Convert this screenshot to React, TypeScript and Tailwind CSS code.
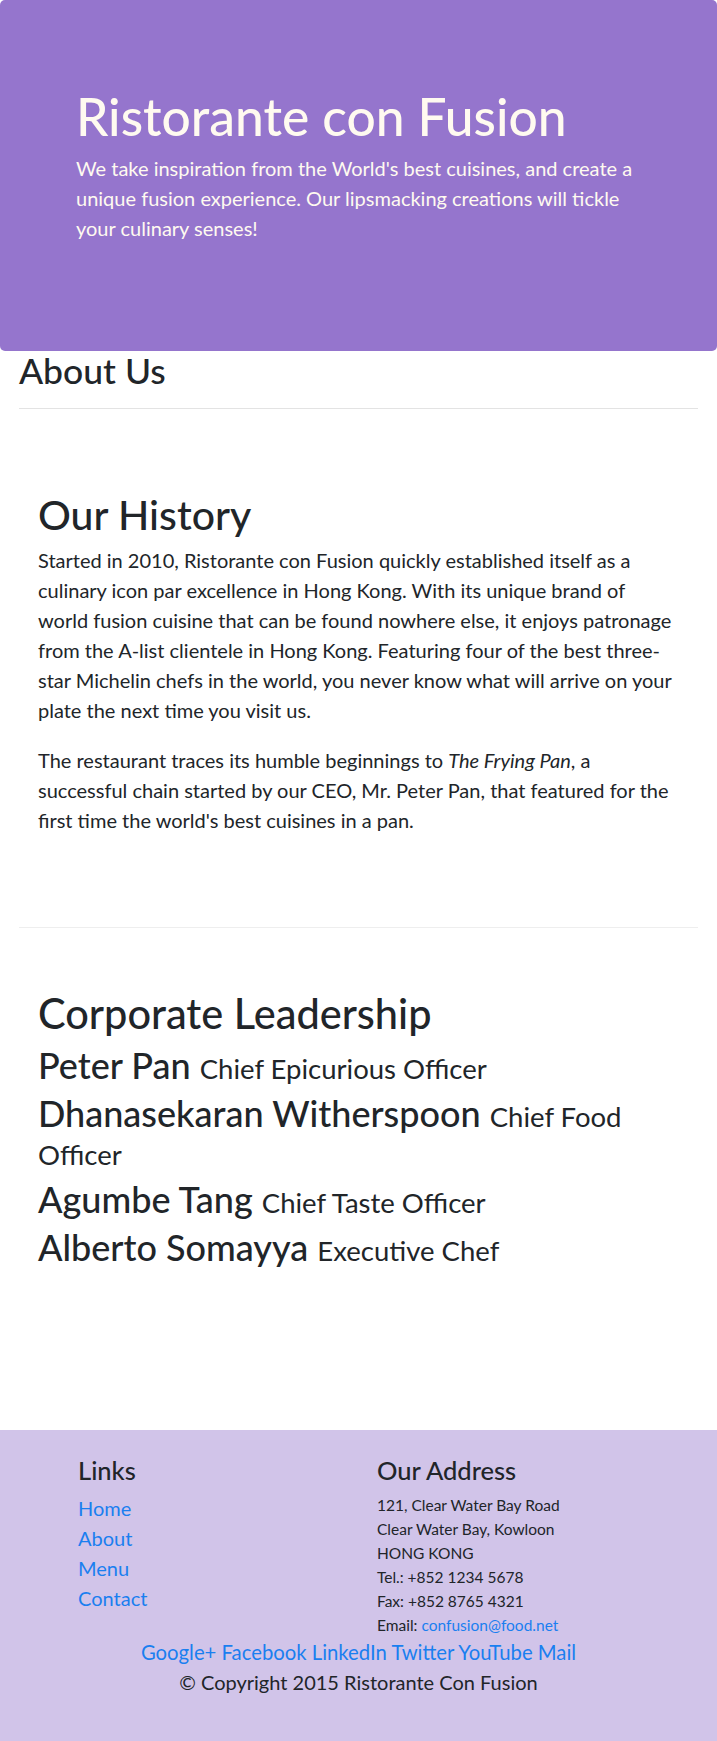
import React from "react";

const leaders: [string, string][] = [
  ["Peter Pan", "Chief Epicurious Officer"],
  ["Dhanasekaran Witherspoon", "Chief Food Officer"],
  ["Agumbe Tang", "Chief Taste Officer"],
  ["Alberto Somayya", "Executive Chef"],
];

export default function App() {
  return (
    <div className="min-h-[1741px] bg-white font-['Lato',sans-serif] text-[#212529]">
      {/* Jumbotron */}
      <header className="h-[351px] rounded-[5px] bg-[#9575cd] px-[76px] pt-[86px] text-[#fffaf0]">
        <h1 className="m-0 text-[51.5px] font-medium leading-[1.2]">Ristorante con Fusion</h1>
        <p className="mt-[5px] text-[20px] leading-[30px]">
          We take inspiration from the World's best cuisines, and create a unique fusion experience. Our
          lipsmacking creations will tickle your culinary senses!
        </p>
      </header>

      <main className="px-[19px]">
        <h2 className="pt-[2px] text-[35.5px] font-medium leading-[35px]">About Us</h2>
        <hr className="mt-[20px] border-0 border-t border-[#e3e3e3]" />

        <section className="px-[19px] pt-[81px] pb-[92px]">
          <h2 className="text-[41px] font-medium leading-[1.2]">Our History</h2>
          <div className="mt-[6px] w-[641px] text-[20px] leading-[30px]">
            <p>
              Started in 2010, Ristorante con Fusion quickly established itself as a culinary icon par
              excellence in Hong Kong. With its unique brand of world fusion cuisine that can be found nowhere
              else, it enjoys patronage from the A-list clientele in Hong Kong. Featuring four of the best
              three-star Michelin chefs in the world, you never know what will arrive on your plate the next
              time you visit us.
            </p>
            <p className="mt-[20px]">
              The restaurant traces its humble beginnings to <em>The Frying Pan</em>, a successful chain
              started by our CEO, Mr. Peter Pan, that featured for the first time the world's best cuisines in
              a pan.
            </p>
          </div>
        </section>

        <hr className="border-0 border-t border-[#eeeeee]" />

        <section className="px-[19px] pt-[61px] pb-[154px]">
          <h2 className="text-[41.5px] font-medium leading-[1.2]">Corporate Leadership</h2>
          <div className="mt-[7px] w-[641px]">
            {leaders.map(([name, title]) => (
              <h3 key={name} className="mb-[10px] text-[36px] font-medium leading-[38px]">
                {name} <small className="text-[27.5px] font-normal leading-none">{title}</small>
              </h3>
            ))}
          </div>
        </section>
      </main>

      {/* Footer */}
      <footer className="bg-[#d1c4e9] pt-[25px] pb-[45px]">
        <div className="flex">
          <div className="ml-[78px] w-[299px]">
            <h5 className="text-[25.5px] font-medium leading-[30px]">Links</h5>
            <ul className="mt-[8px] text-[20px] leading-[30px]">
              <li>
                <a href="#" className="text-[#1a7ff0]">Home</a>
              </li>
              <li>
                <a href="#" className="text-[#1a7ff0]">About</a>
              </li>
              <li>
                <a href="#" className="text-[#1a7ff0]">Menu</a>
              </li>
              <li>
                <a href="#" className="text-[#1a7ff0]">Contact</a>
              </li>
            </ul>
          </div>
          <div>
            <h5 className="text-[25.5px] font-medium leading-[30px]">Our Address</h5>
            <address className="mt-[8px] text-[15.5px] not-italic leading-[24px]">
              121, Clear Water Bay Road
              <br />
              Clear Water Bay, Kowloon
              <br />
              HONG KONG
              <br />
              Tel.: +852 1234 5678
              <br />
              Fax: +852 8765 4321
              <br />
              Email: <a href="#" className="text-[#1a7ff0]">confusion@food.net</a>
            </address>
          </div>
        </div>
        <div className="text-center text-[20px] leading-[30px]">
          <div className="text-[20.3px] text-[#1a7ff0]">
            <a href="#">Google+</a> <a href="#">Facebook</a> <a href="#">LinkedIn</a>{" "}
            <a href="#">Twitter</a> <a href="#">YouTube</a> <a href="#">Mail</a>
          </div>
          <p>© Copyright 2015 Ristorante Con Fusion</p>
        </div>
      </footer>
    </div>
  );
}
